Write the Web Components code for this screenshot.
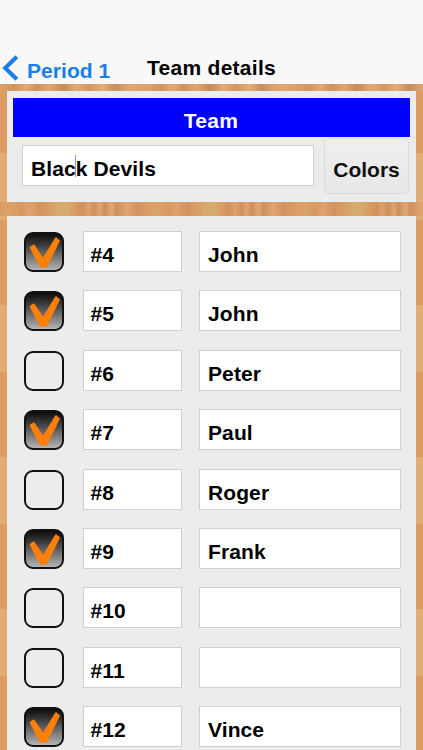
<!DOCTYPE html>
<html lang="en">
<head>
<meta charset="utf-8">
<title>Team details</title>
<style>
html,body{margin:0;padding:0;height:750px;overflow:hidden;background:#f8f8f8;font-family:"Liberation Sans",Arial,sans-serif;font-weight:700;color:#000}
team-app{width:423px;height:750px}
</style>
</head>
<body>
<team-app>
  <nav-bar back="Period 1" title="Team details"></nav-bar>
  <wood-page>
    <team-panel>
      <text-field slot="name" caret="52">Black Devils</text-field>
    </team-panel>
    <roster-panel>
      <player-row checked num="#4" name="John"></player-row>
      <player-row checked num="#5" name="John"></player-row>
      <player-row num="#6" name="Peter"></player-row>
      <player-row checked num="#7" name="Paul"></player-row>
      <player-row num="#8" name="Roger"></player-row>
      <player-row checked num="#9" name="Frank"></player-row>
      <player-row num="#10" name=""></player-row>
      <player-row num="#11" name=""></player-row>
      <player-row checked num="#12" name="Vince"></player-row>
    </roster-panel>
  </wood-page>
</team-app>
<script>
function def(tag, css, html){
  customElements.define(tag, class extends HTMLElement{
    connectedCallback(){
      if(this.shadowRoot) return;
      const r=this.attachShadow({mode:'open'});
      r.innerHTML='<style>'+css+'</style>'+(typeof html==='function'?html(this):html);
    }
  });
}
const esc=s=>String(s||'').replace(/&/g,'&amp;').replace(/</g,'&lt;');

def('team-app',':host{display:flex;flex-direction:column;overflow:hidden}','<slot></slot>');

def('nav-bar',`
  :host{display:flex;flex:none;height:84px;box-sizing:border-box;align-items:flex-end;background:#f8f8f8;padding:0 0 3px 2px}
  a{display:flex;align-items:flex-end;color:#1a7de8;font-size:21px;line-height:24px;gap:8px;width:145px;flex:none;letter-spacing:.05px}
  svg{display:block}
  span{display:block;margin-bottom:-2px}
  h1{margin:0 0 1.5px;font-size:21px;line-height:24px;font-weight:700;color:#000;letter-spacing:.28px}
`,h=>`<a><svg width="17" height="26" viewBox="0 0 17 26"><path d="M14.8 1.8 3.2 13 14.8 24.2" fill="none" stroke="#1a7de8" stroke-width="4"/></svg><span>${esc(h.getAttribute('back'))}</span></a><h1>${esc(h.getAttribute('title'))}</h1>`);

def('wood-page',`
  :host{display:flex;flex-direction:column;flex:1;min-height:0;box-sizing:border-box;padding:7px 7px 0;gap:14px;
    background-color:#dca068;
    background-image:
      linear-gradient(90deg,#dd9f68 0,#d9a268 6%,#d8995f 12%,#dfa16f 18%,#d3945c 25%,#d99b64 31%,#d6aa6e 38%,#d6ab70 44%,#d99c63 49%,#d39159 54%,#dea06e 58%,#cf9059 62%,#dfa572 66%,#cd8f58 69%,#e0a775 74%,#d09058 77%,#dfa471 84%,#d29360 91%,#dc9c66 100%),
      linear-gradient(90deg,#dca170 0,#cf9562 10%,#e0aa76 18%,#cd9160 25%,#dfa672 34%,#c48a5c 43%,#e0ab78 52%,#d29864 61%,#e2ae7c 70%,#c68f62 78%,#dfa672 88%,#dca170 100%),
      linear-gradient(180deg,#dc9c62 0 56%,#e0ad74 56% 100%);
    background-size:147px 14px,147px 7px,100% 152px;
    background-position:3px 118px,0 0,0 -16px;
    background-repeat:repeat-x,repeat-x,repeat-y}
`,'<slot></slot>');

def('team-panel',`
  :host{display:block;flex:none;height:111px;box-sizing:border-box;background:#ececec;padding:7px 6px 0}
  .bar{height:39px;background:#0000ff;color:#fff;font-size:21px;line-height:46px;text-align:center;letter-spacing:.28px;padding-right:1px}
  .row{display:flex;align-items:flex-start;padding-left:9px}
  button{flex:none;display:block;margin:1px 0 0 10px;width:85px;height:56px;box-sizing:border-box;padding:8px 0 0;border:1px solid #dadada;border-radius:5px;background:linear-gradient(#efefef,#e7e7e7);font:700 21px "Liberation Sans",Arial,sans-serif;color:#111}
  ::slotted(text-field){width:292px;margin-top:8px}
`,`<div class="bar">Team</div><div class="row"><slot name="name"></slot><button>Colors</button></div>`);

def('text-field',`
  :host{display:block;position:relative;box-sizing:border-box;background:#fff;border:1px solid #d0d0d0;font-size:21px;line-height:46px;height:41px;padding-left:8px;white-space:nowrap;color:#000;letter-spacing:.1px}
  i{position:absolute;top:9px;width:1px;height:22px;background:#7f9be0}
`,h=>`<slot></slot>${h.hasAttribute('caret')?`<i style="left:${h.getAttribute('caret')}px"></i>`:''}`);

def('check-box',`
  :host{display:block;box-sizing:border-box;width:40px;height:40px;border:2px solid #111;border-radius:9px;background:transparent}
  :host([checked]){background:linear-gradient(#0c0c0c 0,#3a3a3a 30%,#b4b4b4 100%)}
  svg{display:block;position:relative;left:-2px;top:-2px}
`,h=>h.hasAttribute('checked')?`<svg width="40" height="40" viewBox="0 0 40 40"><path d="M6 15.2 10 12.8 19 26.5 31.8 5.5 35.5 8.6 22.7 35 16 35Z" fill="#fb7f08" stroke="#fb7f08" stroke-width="1" stroke-linejoin="round"/></svg>`:'');

def('player-row',`
  :host{display:grid;grid-template-columns:58.5px 116.5px 202px;align-items:center;height:41px}
  check-box{margin-top:1px}
  .num{margin-right:17px;padding-left:7px}
`,h=>`<check-box ${h.hasAttribute('checked')?'checked':''}></check-box><text-field class="num">${esc(h.getAttribute('num'))}</text-field><text-field>${esc(h.getAttribute('name'))}</text-field>`);

def('roster-panel',`
  :host{display:flex;flex-direction:column;gap:18.4px;flex:1;box-sizing:border-box;background:#ececec;padding:15px 0 0 17px}
`,'<slot></slot>');
</script>
</body>
</html>
